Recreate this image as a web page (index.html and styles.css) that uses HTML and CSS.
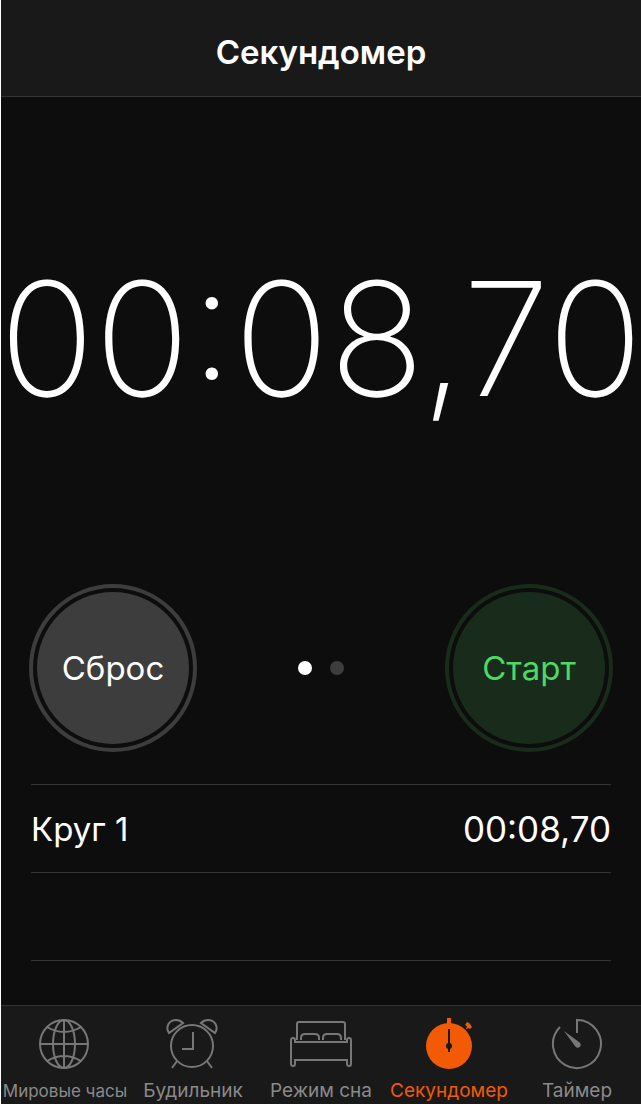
FILE: index.html
```
<!DOCTYPE html>
<html lang="ru">
<head>
    <meta charset="UTF-8">
    <meta name="viewport" content="width=device-width, initial-scale=1.0">
    <title>Секундомер</title>
    <link rel="stylesheet" href="styles.css">
</head>
<body>
    <div class="app">
        <!-- Header -->
        <header class="header">
            <h1>Секундомер</h1>
        </header>

        <!-- Stopwatch -->
        <main class="stopwatch">
            <div class="display">
                <time class="time">00:08,70</time>
            </div>

            <div class="controls">
                <button type="button" class="btn btn-reset">Сброс</button>
                <div class="dots">
                    <span class="dot active"></span>
                    <span class="dot"></span>
                </div>
                <button type="button" class="btn btn-start">Старт</button>
            </div>

            <!-- Laps -->
            <ul class="laps">
                <li class="lap"><span>Круг 1</span><span class="lap-time">00:08,70</span></li>
                <li class="lap"></li>
                <li class="lap"></li>
            </ul>
        </main>

        <!-- Tab bar -->
        <nav class="tabs">
            <a href="#world" class="tab tab-long">
                <svg class="icon" viewBox="0 0 64 52">
                    <circle cx="31" cy="26" r="24"/>
                    <ellipse cx="31" cy="26" rx="11" ry="24"/>
                    <path d="M31 2v48M7 26h48M14 9q17 10 34 0M14 43q17-10 34 0"/>
                </svg>
                <span>Мировые часы</span>
            </a>
            <a href="#alarm" class="tab">
                <svg class="icon" viewBox="0 0 64 52">
                    <circle cx="31" cy="28" r="21"/>
                    <path d="M32 14v17H21M16 43l-5 7M46 43l5 7"/>
                    <path d="M8 15C4 9 8 2 15 2c3 0 5 1 7 3zM54 15c4-6 0-13-7-13-3 0-5 1-7 3z"/>
                </svg>
                <span>Будильник</span>
            </a>
            <a href="#sleep" class="tab">
                <svg class="icon" viewBox="0 0 64 52">
                    <path d="M8 22V6q0-2 2-2h44q2 0 2 2v16"/>
                    <path d="M12 22v-2q0-4 4-4h10q4 0 4 4v2M34 22v-2q0-4 4-4h10q4 0 4 4v2"/>
                    <path d="M6 24h52v-2q0-2 2-2t2 2v24q0 2-2 2t-2-2v-4H6v4q0 2-2 2t-2-2V22q0-2 2-2t2 2z"/>
                </svg>
                <span>Режим сна</span>
            </a>
            <a href="#stopwatch" class="tab active">
                <svg class="icon" viewBox="0 0 64 52">
                    <circle class="fill" cx="32" cy="28" r="23"/>
                    <path class="fill" d="M30 0h4v7h-4zM49 11l1-3-2-1 2-3 2 1 1 1 2 3-2 2-2-1-1 1z"/>
                    <path class="hand" d="M32 11v23"/>
                    <circle class="cut" cx="32" cy="28" r="3"/>
                </svg>
                <span>Секундомер</span>
            </a>
            <a href="#timer" class="tab">
                <svg class="icon" viewBox="0 0 64 52">
                    <path d="M32 15V2A24 24 0 1 1 15 9"/>
                    <path class="fill" d="M19 13l15 11a3 3 0 1 1-4 4z"/>
                </svg>
                <span>Таймер</span>
            </a>
        </nav>
    </div>
</body>
</html>
```

FILE: styles.css
```
* {
    margin: 0;
    padding: 0;
    box-sizing: border-box;
}

body {
    background-color: #0d0d0d;
    color: white;
    font-family: Inter, 'Liberation Sans', sans-serif;
}

.app {
    display: flex;
    flex-direction: column;
    min-height: 100vh;
    border-left: 1px solid white;
}

/* Header */
.header {
    padding: 30px 16px 22px;
    background-color: #191919;
    border-bottom: 1px solid #333;
    text-align: center;
}

.header h1 {
    font-size: 33px;
    line-height: 44px;
    font-weight: 600;
}

/* Stopwatch */
.stopwatch {
    flex: 1;
    display: flex;
    flex-direction: column;
}

.display {
    flex: 1;
    display: flex;
    align-items: center;
    justify-content: center;
    padding-bottom: 4px;
}

.time {
    font-size: 158px;
    line-height: 180px;
    font-weight: 200;
    white-space: nowrap;
}

.controls {
    display: flex;
    align-items: center;
    justify-content: space-between;
    padding: 0 28px 32px;
}

.btn {
    width: 168px;
    height: 168px;
    border: 4px solid;
    border-radius: 50%;
    padding: 4px;
    background-clip: content-box;
    font-family: inherit;
    font-size: 33px;
    cursor: pointer;
}

.btn-reset {
    background-color: #3d3d3d;
    border-color: #3d3d3d;
    color: white;
}

.btn-start {
    background-color: #192c1b;
    border-color: #192c1b;
    color: #4cd964;
}

.dots {
    display: flex;
    gap: 18px;
}

.dot {
    width: 14px;
    height: 14px;
    border-radius: 50%;
    background-color: #3d3d3d;
}

.dot.active {
    background-color: white;
}

/* Laps */
.laps {
    list-style: none;
    margin: 0 30px;
}

.lap {
    display: flex;
    align-items: center;
    justify-content: space-between;
    height: 88px;
    border-top: 1px solid #333;
    font-size: 33px;
}

.lap-time {
    font-size: 35px;
}

.lap:last-child {
    height: 45px;
}

/* Tab bar */
.tabs {
    display: flex;
    padding: 12px 0 1px;
    background-color: #191919;
    border-top: 1px solid #333;
}

.tab {
    flex: 1 1 0;
    min-width: 0;
    display: flex;
    flex-direction: column;
    align-items: center;
    gap: 9px;
    color: #8a8a8a;
    font-size: 19px;
    line-height: 24px;
    text-decoration: none;
    white-space: nowrap;
}

.tab-long {
    font-size: 17px;
}

.tab.active {
    color: #f25a05;
}

.icon {
    width: 64px;
    height: 52px;
    fill: none;
    stroke: #777;
    stroke-width: 2;
}

.icon .fill {
    fill: #777;
    stroke: none;
}

.active .icon .fill {
    fill: #f25a05;
}

.icon .hand {
    stroke: #191919;
}

.icon .cut {
    fill: #191919;
    stroke: none;
}
```
